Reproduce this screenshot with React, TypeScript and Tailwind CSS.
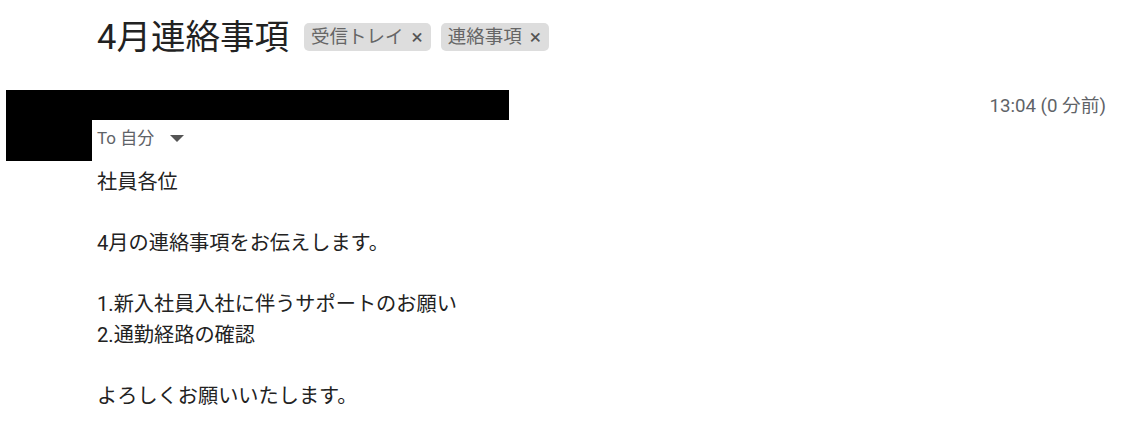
const font = "font-['Roboto','Noto_Sans_CJK_JP',sans-serif]";

function Chip({ label }: { label: string }) {
  return (
    <span className="inline-flex h-[28px] items-center gap-[8px] rounded-[5px] bg-[#dddddd] pl-[7px] pr-[8px] text-[18.5px] leading-none text-[#666666]">
      {label}
      <span className="text-[21px] leading-none text-[#555555]">×</span>
    </span>
  );
}

export default function App() {
  const lines = [
    "社員各位",
    "",
    "4月の連絡事項をお伝えします。",
    "",
    "1.新入社員入社に伴うサポートのお願い",
    "2.通勤経路の確認",
    "",
    "よろしくお願いいたします。",
  ];

  return (
    <div className={`h-[428px] w-[1127px] overflow-hidden bg-white ${font}`}>
      <div className="flex h-[57px] items-center gap-[10px] pl-[97px] pt-[17px]">
        <h1 className="mr-[5px] text-[34.5px] leading-[40px] text-[#222222]">4月連絡事項</h1>
        <Chip label="受信トレイ" />
        <Chip label="連絡事項" />
      </div>

      <div className="mt-[33px] flex">
        <div className="ml-[6px] h-[71px] w-[86px] bg-black" />
        <div className="flex flex-col">
          <div className="h-[30px] w-[417px] bg-black" />
          <div className="mt-[8px] flex items-center pl-[5px] text-[17px] leading-[20px] text-[#5f6368]">
            <span>To 自分</span>
            <svg width="14" height="7" viewBox="0 0 14 7" className="ml-[16px]">
              <path d="M0 0 L14 0 L7 7 Z" fill="#555555" />
            </svg>
          </div>
        </div>
        <div className="ml-auto pr-[21px] pt-[6px] text-[18.7px] leading-[20px] text-[#5f6368]">13:04 (0 分前)</div>
      </div>

      <div className="mt-[6px] pl-[97px] text-[20.2px] leading-[30.5px] text-[#222222]">
        {lines.map((line, i) => (
          <div key={i} className="h-[30.5px]">
            {line}
          </div>
        ))}
      </div>
    </div>
  );
}
